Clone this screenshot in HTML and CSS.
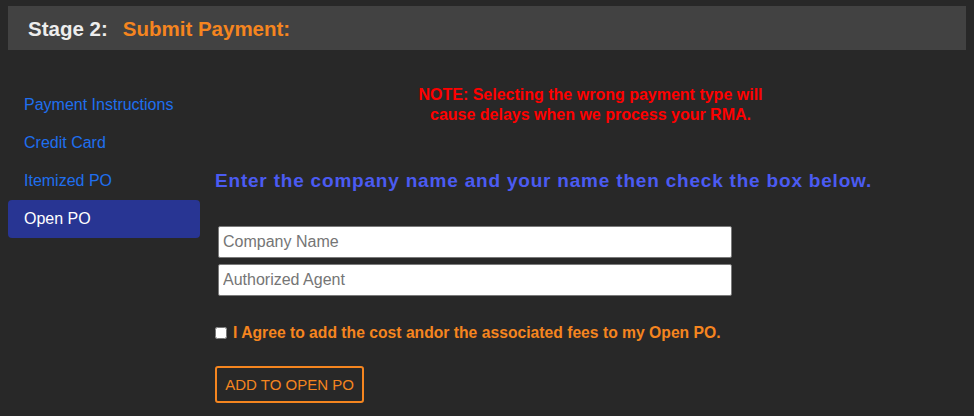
FILE: index.html
```html
<!DOCTYPE html>
<html lang="en">
<head>
<meta charset="utf-8">
<title>Submit Payment</title>
<link rel="stylesheet" href="styles.css">
</head>
<body>
<header class="stage-bar">
  <span class="stage-num">Stage 2:</span>
  <span class="stage-title">Submit Payment:</span>
</header>
<div class="layout">
  <nav class="side-nav">
    <a class="nav-item" href="#">Payment Instructions</a>
    <a class="nav-item" href="#">Credit Card</a>
    <a class="nav-item" href="#">Itemized PO</a>
    <a class="nav-item active" href="#">Open PO</a>
  </nav>
  <main class="content">
    <p class="note">NOTE: Selecting the wrong payment type will cause delays when we process your RMA.</p>
    <h2 class="instr">Enter the company name and your name then check the box below.</h2>
    <div class="fields">
      <input class="field" type="text" placeholder="Company Name">
      <input class="field" type="text" placeholder="Authorized Agent">
    </div>
    <label class="agree"><input class="agree-box" type="checkbox"> I Agree to add the cost andor the associated fees to my Open PO.</label>
    <button class="add-btn" type="button">ADD TO OPEN PO</button>
  </main>
</div>
</body>
</html>
```

FILE: styles.css
```css
html, body {
  margin: 0;
  background: #282828;
}
body {
  padding: 6px 8px 0 8px;
  font-family: "Liberation Sans", Arial, Helvetica, sans-serif;
}
.stage-bar {
  height: 44px;
  background: #424242;
  display: flex;
  align-items: center;
  padding-left: 20px;
  padding-top: 1px;
  box-sizing: border-box;
  font-size: 20.5px;
  font-weight: bold;
}
.stage-num {
  color: #ededed;
  margin-right: 15px;
}
.stage-title {
  color: #f5851f;
}
.layout {
  display: flex;
  align-items: flex-start;
}
.side-nav {
  width: 192px;
  flex: none;
  display: flex;
  flex-direction: column;
  margin-top: 36px;
}
.nav-item {
  display: block;
  padding: 10px 16px;
  line-height: 18px;
  font-size: 16px;
  color: #1f6fef;
  text-decoration: none;
  border-radius: 4px;
}
.nav-item.active {
  background: #283593;
  color: #ffffff;
}
.content {
  flex: 1;
  padding-left: 15px;
}
.note {
  margin: 35px auto 0;
  width: 380px;
  text-align: center;
  color: #ff0000;
  font-weight: bold;
  font-size: 16px;
  line-height: 20px;
}
.instr {
  margin: 45px 0 0;
  color: #4b5bf2;
  font-size: 19px;
  line-height: 22px;
  letter-spacing: 0.8px;
}
.fields {
  display: flex;
  flex-direction: column;
  gap: 6px;
  margin-top: 34px;
  padding-left: 3px;
}
.field {
  width: 514px;
  height: 32px;
  box-sizing: border-box;
  border: 1px solid #7a7a7a;
  border-radius: 2px;
  padding: 0 4px;
  font-family: "Liberation Sans", Arial, sans-serif;
  font-size: 16px;
  background: #ffffff;
}
.field::placeholder {
  color: #757575;
}
.agree {
  display: flex;
  align-items: center;
  margin-top: 27px;
  color: #f5851f;
  font-weight: bold;
  font-size: 15.7px;
  line-height: 20px;
}
.agree-box {
  width: 12px;
  height: 12px;
  margin: 0 6px 0 0;
}
.add-btn {
  display: block;
  margin-top: 23px;
  width: 149px;
  height: 37px;
  background: transparent;
  border: 2px solid #f5851f;
  border-radius: 3px;
  color: #f5851f;
  font-family: "Liberation Sans", Arial, sans-serif;
  font-size: 15px;
  padding: 0;
}
```
